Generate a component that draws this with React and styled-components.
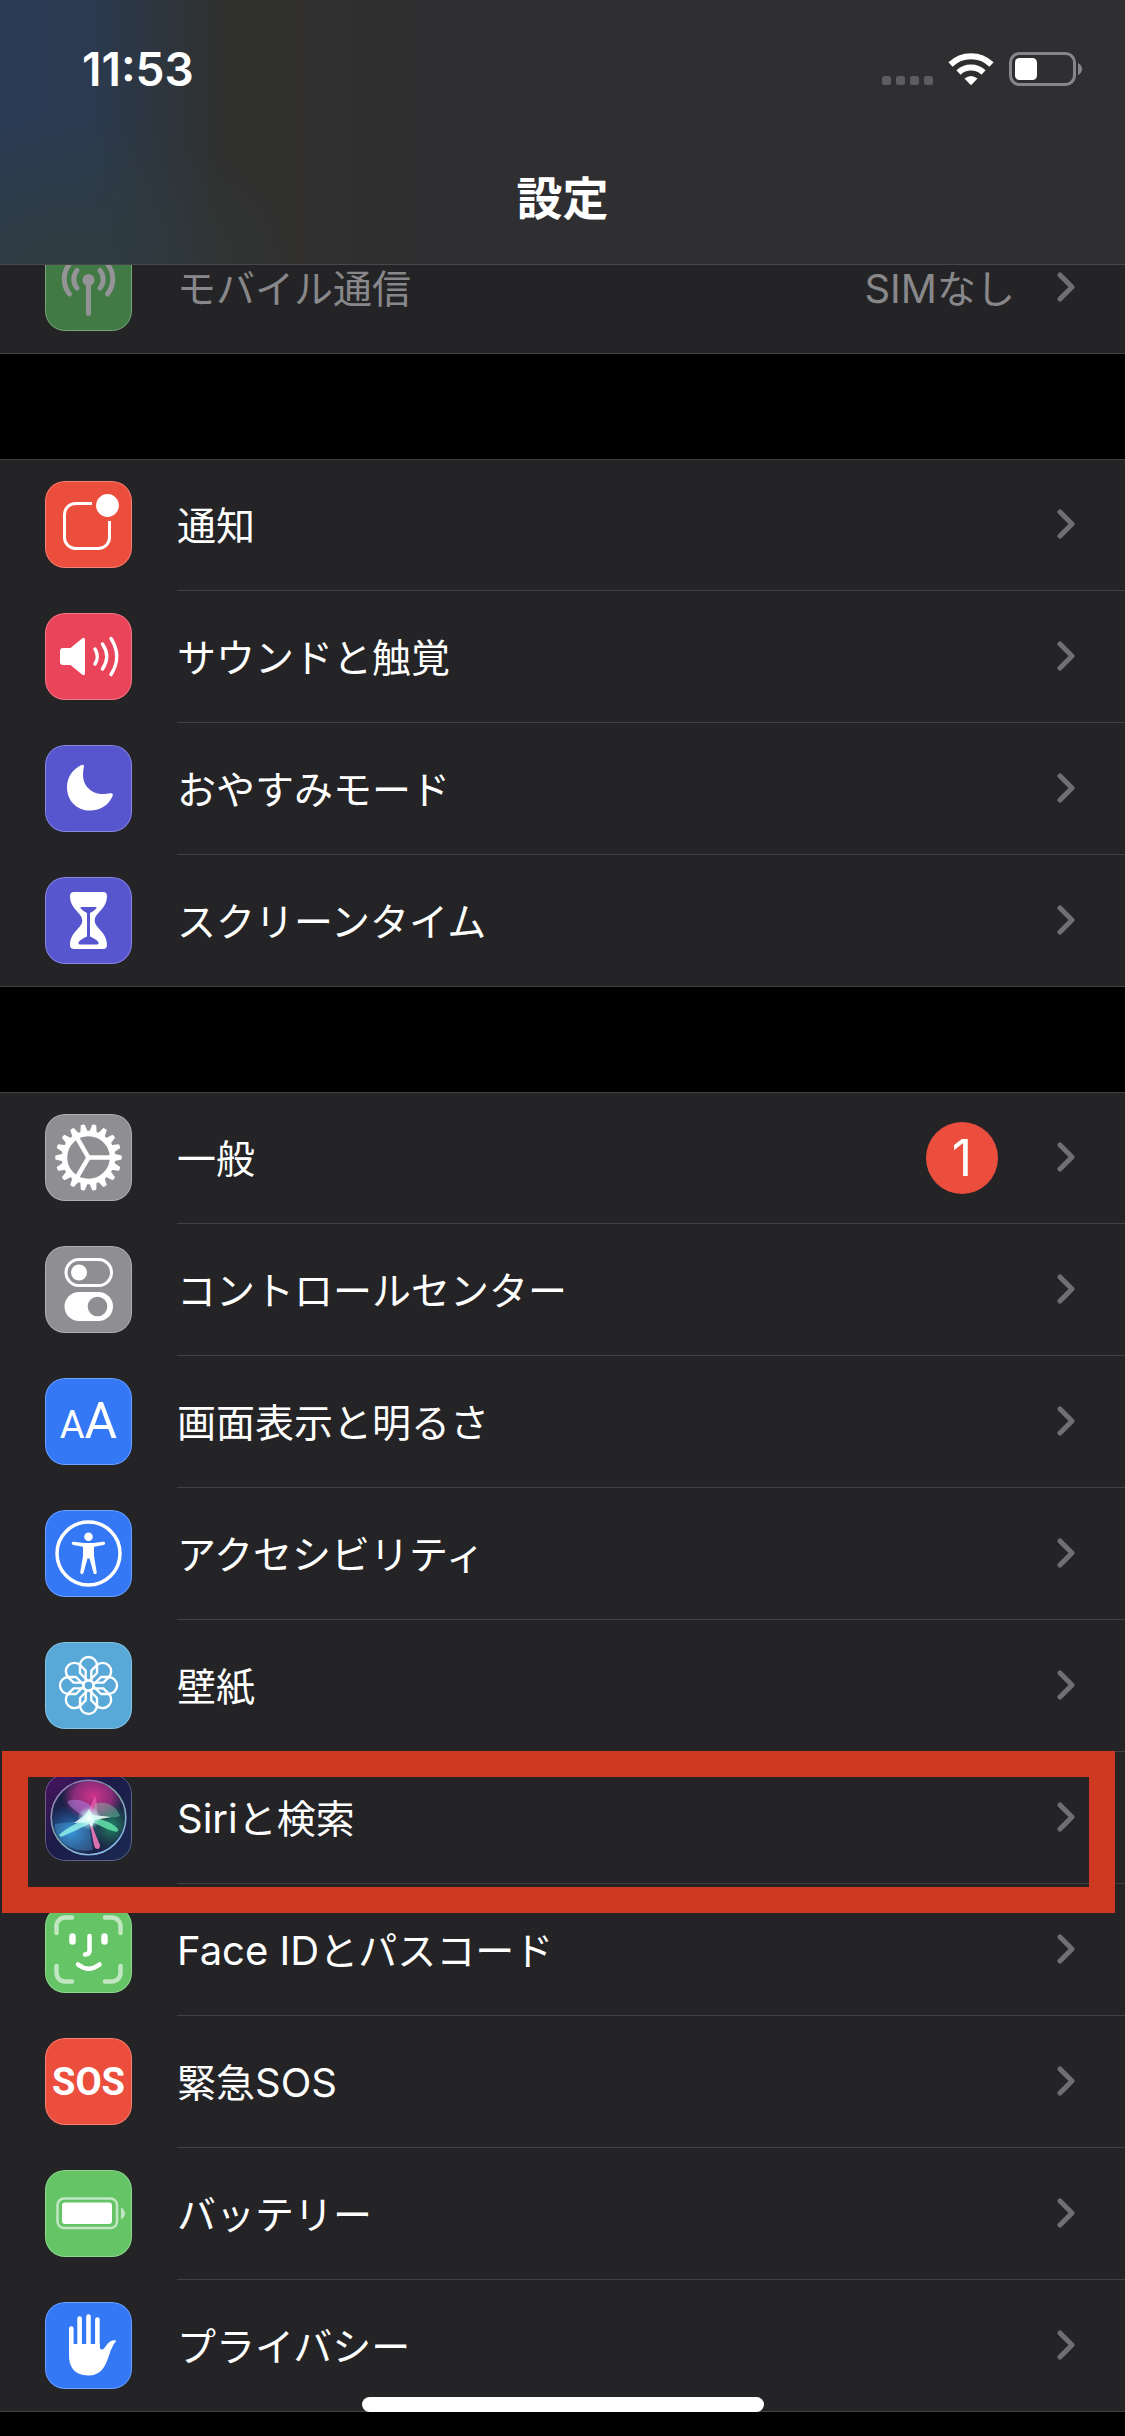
import React from "react";
import styled, { createGlobalStyle } from "styled-components";

const GlobalStyle = createGlobalStyle`
  *, *::before, *::after { box-sizing: border-box; }
  html { background: #000; }
  body {
    margin: 0;
    background: #000;
    color: #fff;
    font-family: Inter, "Noto Sans CJK JP", sans-serif;
    -webkit-font-smoothing: antialiased;
  }
`;

const Page = styled.div`
  display: flex;
  flex-direction: column;
  padding-bottom: 24px;
`;

const Header = styled.header`
  position: sticky;
  top: 0;
  z-index: 2;
  height: 265px;
  margin-bottom: -43px;
  border-bottom: 1px solid #48484a;
  background:
    radial-gradient(ellipse 240px 150px at 60px 100%, rgba(48, 60, 62, 0.9), rgba(48, 56, 58, 0)),
    linear-gradient(to right, #2b3b55 0, #2b3a50 90px, #2d3640 150px, #30312f 220px, #31302f 300px, #2f2f31 420px, #2f2f31 100%);
`;

const StatusBar = styled.div`
  display: flex;
  align-items: center;
  justify-content: space-between;
  height: 138px;
  padding: 0 42px 0 82px;
`;

const Time = styled.time`
  font-size: 46px;
  line-height: 52px;
  font-weight: 600;
`;

const StatusIcons = styled.div`
  display: flex;
  align-items: center;
`;

const Title = styled.h1`
  margin: 0;
  text-align: center;
  font-size: 46px;
  line-height: 120px;
  font-weight: 700;
`;

const List = styled.main`
  display: flex;
  flex-direction: column;
  gap: 105px;
`;

const Group = styled.nav`
  position: relative;
  display: flex;
  flex-direction: column;
  background: #242426;
  box-shadow: inset 0 1px #414144, inset 0 -1px #414144;
`;

const RowBody = styled.span`
  display: flex;
  flex: 1;
  align-items: center;
  min-width: 0;
  height: 132px;
  padding-right: 50px;
  border-bottom: 1px solid #414144;

  > svg { margin-bottom: 2px; }
`;

const Row = styled.a`
  position: relative;
  display: flex;
  align-items: center;
  gap: 45px;
  height: 132px;
  padding-left: 45px;
  color: ${(p) => (p.$dimmed ? "#88888b" : "#fff")};
  text-decoration: none;

  &:last-child ${RowBody} { border-bottom-color: transparent; }
`;

const Tile = styled.span`
  position: relative;
  display: flex;
  flex: none;
  align-items: center;
  justify-content: center;
  width: 87px;
  height: 87px;
  margin-bottom: 1px;
  overflow: hidden;
  border-radius: 20px;
  background: ${(p) => p.$color};
  color: ${(p) => (p.$dimmed ? "#949497" : "#fff")};

  &::after {
    content: "";
    position: absolute;
    inset: 0;
    border: 1px solid rgba(255, 255, 255, 0.3);
    border-radius: 20px;
  }
  svg { display: block; }
`;

const Label = styled.span`
  flex: 1;
  padding-top: 3px;
  font-size: 39px;
  line-height: 56px;
  white-space: nowrap;
`;

const Latin = styled.span`
  font-size: 40px;
`;

const Value = styled.span`
  margin-right: 42px;
  padding-top: 3px;
  color: #88888b;
  font-size: 39px;
  line-height: 56px;
`;

const Badge = styled.span`
  display: flex;
  align-items: center;
  justify-content: center;
  width: 72px;
  height: 72px;
  margin-right: 59px;
  border-radius: 50%;
  background: #eb4e3d;
  font-size: 50px;
  line-height: 72px;
`;

const Letters = styled.span`
  display: flex;
  align-items: baseline;
  padding-top: 2px;
  font-family: Roboto, sans-serif;
  line-height: 60px;
`;

const SmallLetter = styled.span`
  font-size: 38px;
`;

const BigLetter = styled.span`
  font-size: 50px;
`;

const SosText = styled.span`
  font-family: Roboto, sans-serif;
  font-size: 38px;
  line-height: 56px;
  font-weight: 700;
`;

const Highlight = styled.span`
  position: absolute;
  z-index: 1;
  top: -1px;
  right: 10px;
  bottom: -29px;
  left: 2px;
  border: 26px solid #cf3821;
  pointer-events: none;
`;

const HomeIndicator = styled.div`
  position: fixed;
  z-index: 3;
  bottom: 24px;
  left: 50%;
  width: 402px;
  height: 15px;
  margin-left: -201px;
  border-radius: 8px;
  background: #fff;
`;

const Chevron = () => (
  <svg width="18" height="30" viewBox="0 0 18 30" fill="none" stroke="#707074" strokeWidth="5" strokeLinecap="round" strokeLinejoin="round" aria-hidden="true">
    <path d="M3 3 15 15 3 27" />
  </svg>
);

const Glyph = ({ children }) => (
  <svg width="87" height="87" viewBox="0 0 87 87" fill="none" stroke="currentColor" strokeLinecap="round" strokeLinejoin="round" aria-hidden="true">
    {children}
  </svg>
);

const solid = { fill: "currentColor", stroke: "none" };

const CellularIcon = () => (
  <Glyph>
    <circle cx="43.5" cy="36" r="6" {...solid} />
    <path strokeWidth="5" d="M43.5 36V69.500" />
    <path strokeWidth="5" d="M32 26.500a13.500 13.500 0 0 0 0 17.500M55 26.500a13.500 13.500 0 0 1 0 17.500M24.500 20a24 24 0 0 0 0 30M62.500 20a24 24 0 0 1 0 30" />
  </Glyph>
);

const NotificationIcon = () => (
  <Glyph>
    <path strokeWidth="3" strokeLinecap="butt" d="M47 22.500H30.500a11 11 0 0 0-11 11v23a11 11 0 0 0 11 11h23a11 11 0 0 0 11-11V40" />
    <circle cx="62.5" cy="24.5" r="11.400" {...solid} />
  </Glyph>
);

const SoundIcon = () => (
  <Glyph>
    <path {...solid} d="M18 35h7.500L37 25.500q3-2 3 1.500v33q0 3.500-3 1.500L25.500 52H18q-3 0-3-3V38q0-3 3-3z" />
    <path strokeWidth="3.400" d="M50 36q4.600 7.500 0 15M57.500 31q8.500 12.500 0 25M66 25.500q11.500 18 0 36" />
  </Glyph>
);

const MoonIcon = () => (
  <Glyph>
    <path {...solid} d="M36.500 20C28 24 22 32 22 42c0 13.500 9.500 23.600 23 23.600 10.500 0 19-6 22.600-14.600.8-2-.3-3.200-2.300-2.700C50 52 34 43 38.900 22c.4-2-.8-2.700-2.400-2z" />
  </Glyph>
);

const HourglassIcon = () => (
  <Glyph>
    <path {...solid} d="M29 15h29q4 0 4 4c0 13-12.300 17-12.300 24.500S62 55 62 68q0 4-4 4H29q-4 0-4-4c0-13 12.300-17 12.300-24.500S25 32 25 19q0-4 4-4z" />
    <path fill="#5756ce" stroke="none" d="M36.500 30h14q2 0 .8 1.500Q49 34 45 36v23.500q6 2.500 8.300 5.500.8 2.500-1.300 2.500H35q-2.100 0-1.300-2.500 2.300-3 8.300-5.500V36q-4-2-6.300-4.500-1.200-1.500.8-1.500z" />
  </Glyph>
);

const GearIcon = () => (
  <Glyph>
    {Array.from({ length: 18 }, (_, i) => (
      <path key={i} {...solid} transform={`rotate(${i * 20} 43.500 43.500)`} d="M68 39.500l8.500 2q.6 2 0 4l-8.500 2z" />
    ))}
    <circle cx="43.5" cy="43.5" r="24" strokeWidth="5.500" />
    {[0, 120, 240].map((a) => (
      <path key={a} strokeWidth="4.500" transform={`rotate(${a} 43.500 43.500)`} d="M43.500 43.500H66" />
    ))}
  </Glyph>
);

const TogglesIcon = () => (
  <Glyph>
    <rect x="21" y="13.500" width="45.500" height="26" rx="13" strokeWidth="3" />
    <circle cx="34" cy="26.500" r="8" {...solid} />
    <rect x="19.500" y="46" width="48.500" height="29" rx="14.500" {...solid} />
    <circle cx="52.500" cy="60.500" r="9.800" fill="#8e8e93" stroke="none" />
  </Glyph>
);

const AccessibilityIcon = () => (
  <Glyph>
    <circle cx="43.500" cy="43.500" r="31.500" strokeWidth="3.500" />
    <circle cx="43.500" cy="26.800" r="4.300" {...solid} />
    <path {...solid} d="M29 31.700 38.500 33h10l9.500-1.300c2.700-.2 3 2.700.5 3.200L49 36.700V46l2.700 16c.3 2.500-2.700 3-3.300.6L44.500 48.500h-2L38.600 62.600c-.6 2.400-3.600 1.900-3.300-.6L38 46V36.700L28.500 34.900c-2.500-.5-2.200-3.400.5-3.200z" />
  </Glyph>
);

const FlowerIcon = () => (
  <Glyph>
    {Array.from({ length: 8 }, (_, i) => (
      <path key={i} strokeWidth="2.400" transform={`rotate(${i * 45} 43.500 43.500)`} d="M43.500 39.500 35 31V23.500a8.500 8.500 0 0 1 17 0V31z" />
    ))}
    <circle cx="43.500" cy="43.500" r="5" fill="#58a8d8" strokeWidth="2.400" />
  </Glyph>
);

const SiriIcon = () => (
  <Glyph>
    <defs>
      <linearGradient id="siriTile" x1="0" y1="0" x2="1" y2="1">
        <stop offset="0" stopColor="#4a1260" />
        <stop offset="0.450" stopColor="#1c1c48" />
        <stop offset="1" stopColor="#1a2a50" />
      </linearGradient>
      <linearGradient id="siriRing" x1="0" y1="0" x2="0.600" y2="1">
        <stop offset="0" stopColor="#a070b8" />
        <stop offset="0.600" stopColor="#7fa8a8" />
        <stop offset="1" stopColor="#88b8e8" />
      </linearGradient>
      <radialGradient id="siriPink"><stop offset="0" stopColor="#d0338a" /><stop offset="0.600" stopColor="#a82f86" stopOpacity="0.800" /><stop offset="1" stopColor="#a82f86" stopOpacity="0" /></radialGradient>
      <radialGradient id="siriBlue"><stop offset="0" stopColor="#2888d0" /><stop offset="1" stopColor="#2a60b0" stopOpacity="0" /></radialGradient>
      <radialGradient id="siriGreen"><stop offset="0" stopColor="#238868" /><stop offset="1" stopColor="#1c6050" stopOpacity="0" /></radialGradient>
      <radialGradient id="siriCore"><stop offset="0" stopColor="#fff" /><stop offset="0.350" stopColor="#d8fff8" stopOpacity="0.800" /><stop offset="1" stopColor="#b0f0ff" stopOpacity="0" /></radialGradient>
      <clipPath id="siriOrb"><circle cx="43.500" cy="43.500" r="36.500" /></clipPath>
    </defs>
    <rect width="87" height="87" fill="url(#siriTile)" stroke="none" />
    <circle cx="43.500" cy="43.500" r="37.500" fill="#1b2046" stroke="none" />
    <g clipPath="url(#siriOrb)" stroke="none">
      <ellipse cx="26" cy="58" rx="30" ry="28" fill="url(#siriBlue)" />
      <ellipse cx="66" cy="52" rx="24" ry="26" fill="url(#siriGreen)" />
      <ellipse cx="48" cy="22" rx="31" ry="25" fill="url(#siriPink)" />
      <path fill="#5dbcf0" opacity="0.300" d="M43 46 10 50C9 66 27 80 48 76z" />
      <path fill="#b080e0" opacity="0.550" d="M43 45C30 37 21 30 23 27c8-3 23-1 31 15z" />
      <path fill="#f060b0" opacity="0.700" d="M38 44c4-4 8-13 12-22 3 7 1 16 4 25z" />
      <path fill="#80d8b0" opacity="0.400" d="M50 30c10-4 22 2 25 12-6 3-18 0-27 1z" />
      <path fill="#8ff0e8" opacity="0.850" d="M44 43C32 49 20 55 14 61l2 2c9-4 21-9 33-16z" />
      <path fill="#62e0a8" opacity="0.850" d="M44 42c10 2 23 6 29 13q1 4-5 2C60 55 52 49 45 48z" />
      <path fill="#f078b8" opacity="0.900" d="M43 43c5 9 7 17 12 28q0 6-5 3c-3-8-2-17-8-29z" />
      <path fill="#f2fffc" d="M29 49 40 41l4-6 4 6 18 2-16 3-3 7-4-5z" opacity="0.900" />
      <circle cx="44" cy="44" r="12" fill="url(#siriCore)" />
    </g>
    <circle cx="43.500" cy="43.500" r="37.300" stroke="url(#siriRing)" strokeWidth="1.600" />
  </Glyph>
);

const FaceIdIcon = () => (
  <Glyph>
    <path opacity="0.600" strokeWidth="4.500" d="M11.500 27V20a8.500 8.500 0 0 1 8.500-8.500h7M60 11.500h7a8.500 8.500 0 0 1 8.500 8.500v7M75.500 60v7a8.500 8.500 0 0 1-8.500 8.500h-7M27 75.500h-7a8.500 8.500 0 0 1-8.500-8.500v-7" />
    <path strokeWidth="6.500" d="M27.500 30.500v5M59.500 30.500v5" />
    <path strokeWidth="4.500" d="M44.500 30v14.500q0 4-4.500 4M33 58.500q10.500 8.500 21.500 0" />
  </Glyph>
);

const BatteryTileIcon = () => (
  <Glyph>
    <rect x="12.500" y="28.500" width="59.500" height="29.500" rx="6.500" strokeWidth="2.500" opacity="0.600" />
    <rect x="17" y="32.500" width="50" height="21.500" rx="3" {...solid} />
    <path {...solid} opacity="0.600" d="M76 37.500q4 2.500 4 6t-4 6z" />
  </Glyph>
);

const HandIcon = () => (
  <Glyph>
    <path strokeWidth="4.600" d="M26.300 26.500V50M34.600 16.500V46M43.500 14.500V46M52.400 17.500V46" />
    <path {...solid} d="M24 42h31v4.500q2 2 4 0c2.500-3.500 5-7 8-8q3.500-.8 4.300.6c-3.300 3.400-5.300 8.400-7.300 14.400C60 65.500 56 73.500 43 73.500 30 73.500 24 65 24 54z" />
  </Glyph>
);

const StatusGlyphs = () => (
  <svg width="201" height="34" viewBox="0 0 201 34" fill="none" aria-hidden="true">
    <g fill="#5d5d60">
      <rect x="0" y="24" width="9" height="9" rx="2.500" />
      <rect x="14" y="24" width="9" height="9" rx="2.500" />
      <rect x="28" y="24" width="9" height="9" rx="2.500" />
      <rect x="42" y="24" width="9" height="9" rx="2.500" />
    </g>
    <g stroke="#fff" strokeWidth="6">
      <path d="M68.500 12.500a29.500 29.500 0 0 1 41 0" />
      <path d="M76.500 20.500a18 18 0 0 1 25 0" />
    </g>
    <path fill="#fff" d="M82.500 26.500q6.500-5 13 0L89.800 32.500q-.8.800-1.600 0z" />
    <rect x="128.500" y="1.500" width="64" height="31" rx="9" stroke="#868688" strokeWidth="3" />
    <rect x="133" y="6" width="22" height="22" rx="4.500" fill="#fff" />
    <path fill="#868688" d="M196 11q4 2 4 6t-4 6z" />
  </svg>
);

const groups = [
  [{ icon: <CellularIcon />, color: "#417a44", label: "モバイル通信", value: ["SIM", "なし"], dimmed: true }],
  [
    { icon: <NotificationIcon />, color: "#eb4e3d", label: "通知" },
    { icon: <SoundIcon />, color: "#ea445a", label: "サウンドと触覚" },
    { icon: <MoonIcon />, color: "#5756ce", label: "おやすみモード" },
    { icon: <HourglassIcon />, color: "#5756ce", label: "スクリーンタイム" },
  ],
  [
    { icon: <GearIcon />, color: "#8e8e93", label: "一般", badge: 1 },
    { icon: <TogglesIcon />, color: "#8e8e93", label: "コントロールセンター" },
    {
      icon: (
        <Letters aria-hidden="true">
          <SmallLetter>A</SmallLetter>
          <BigLetter>A</BigLetter>
        </Letters>
      ),
      color: "#3478f6",
      label: "画面表示と明るさ",
    },
    { icon: <AccessibilityIcon />, color: "#3478f6", label: "アクセシビリティ" },
    { icon: <FlowerIcon />, color: "#58a8d8", label: "壁紙" },
    { icon: <SiriIcon />, color: "#1c1c48", latin: "Siri", label: "と検索", highlighted: true },
    { icon: <FaceIdIcon />, color: "#65c466", latin: "Face ID", label: "とパスコード" },
    { icon: <SosText aria-hidden="true">SOS</SosText>, color: "#eb4e3d", label: "緊急", latinEnd: "SOS" },
    { icon: <BatteryTileIcon />, color: "#65c466", label: "バッテリー" },
    { icon: <HandIcon />, color: "#3478f6", label: "プライバシー" },
  ],
];

const SettingRow = ({ icon, color, latin, label, latinEnd, value, badge, dimmed, highlighted }) => (
  <Row href="#" $dimmed={dimmed}>
    <Tile $color={color} $dimmed={dimmed}>{icon}</Tile>
    <RowBody>
      <Label>
        {latin && <Latin>{latin}</Latin>}
        {label}
        {latinEnd && <Latin>{latinEnd}</Latin>}
      </Label>
      {value && <Value><Latin>{value[0]}</Latin>{value[1]}</Value>}
      {badge && <Badge>{badge}</Badge>}
      <Chevron />
    </RowBody>
    {highlighted && <Highlight />}
  </Row>
);

export default function App() {
  return (
    <Page lang="ja">
      <GlobalStyle />
      <Header>
        <StatusBar>
          <Time>11:53</Time>
          <StatusIcons><StatusGlyphs /></StatusIcons>
        </StatusBar>
        <Title>設定</Title>
      </Header>
      <List>
        {groups.map((rows, i) => (
          <Group key={i}>
            {rows.map((row) => <SettingRow key={row.label} {...row} />)}
          </Group>
        ))}
      </List>
      <HomeIndicator />
    </Page>
  );
}
